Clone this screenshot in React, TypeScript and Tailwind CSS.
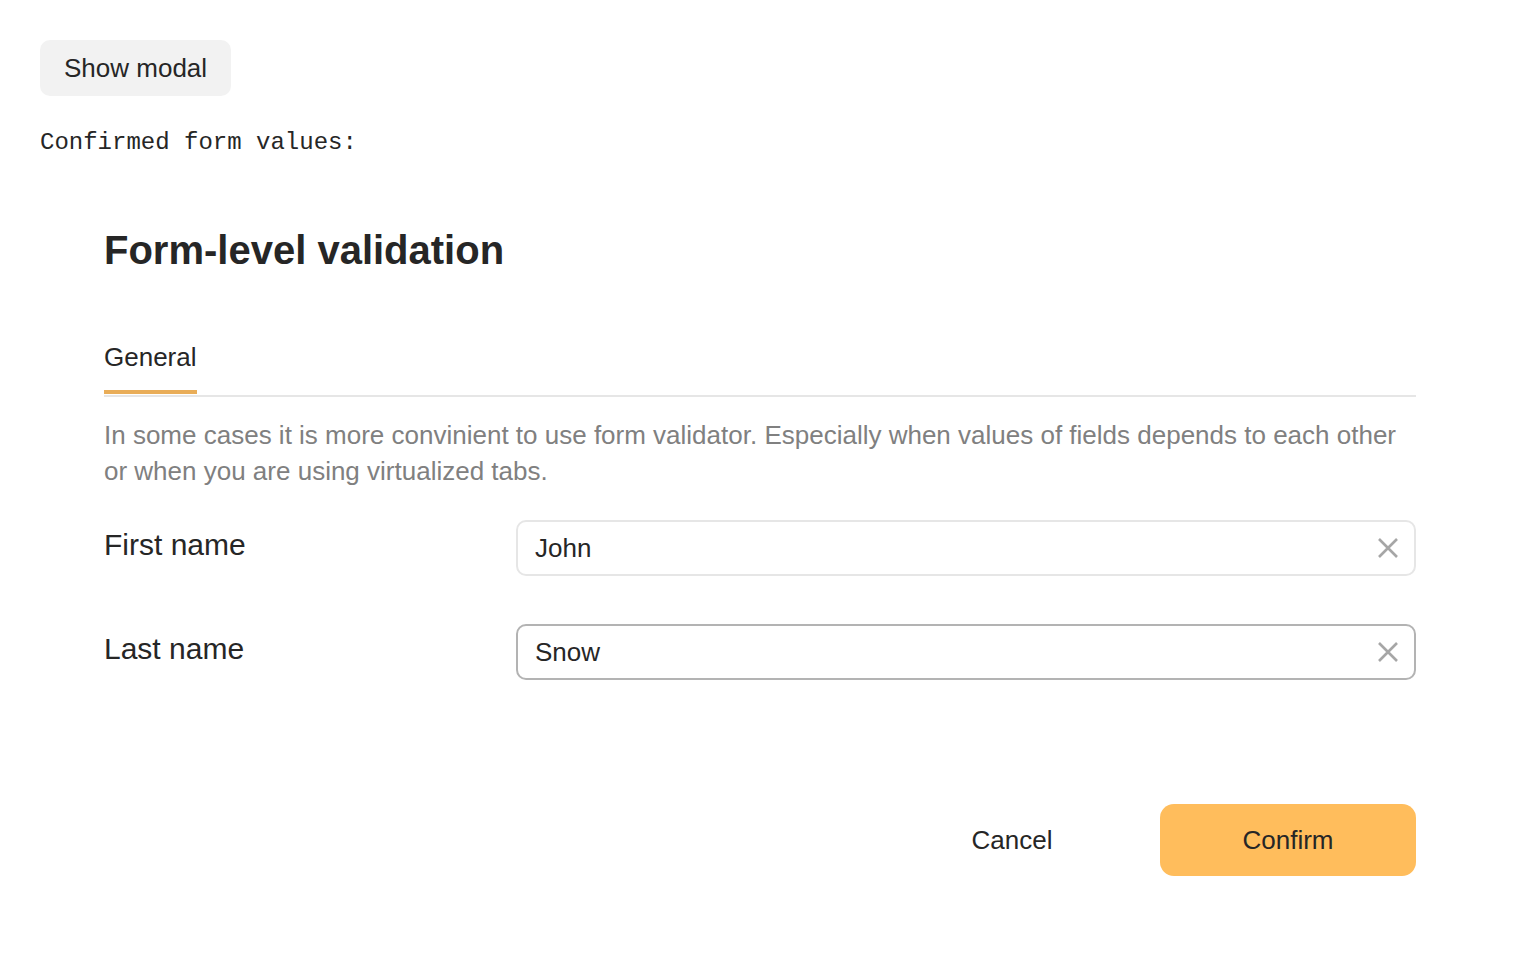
import React, { useState } from 'react'

const sans = "font-['Liberation_Sans',Arial,sans-serif]"

function ClearIcon() {
  return (
    <svg width="22" height="22" viewBox="0 0 22 22" fill="none" stroke="#a6a6a6" strokeWidth="2.6" strokeLinecap="butt">
      <path d="M2 2 L20 20 M20 2 L2 20" />
    </svg>
  )
}

function Field({
  label,
  value,
  onChange,
  active,
}: {
  label: string
  value: string
  onChange: (v: string) => void
  active?: boolean
}) {
  return (
    <div className="flex items-start">
      <label className="w-[412px] shrink-0 pt-[5px] text-[30px] leading-[40px] text-[#262626]">{label}</label>
      <div
        className={
          'flex h-[56px] flex-1 items-center rounded-[10px] border-2 pl-[17px] pr-[15px] ' +
          (active ? 'border-[#b3b3b3]' : 'border-[#e6e6e6]')
        }
      >
        <input
          value={value}
          onChange={(e) => onChange(e.target.value)}
          className="min-w-0 flex-1 bg-transparent text-[26px] text-[#262626] outline-none"
        />
        <button type="button" onClick={() => onChange('')} className="flex items-center justify-center">
          <ClearIcon />
        </button>
      </div>
    </div>
  )
}

export default function App() {
  const [first, setFirst] = useState('John')
  const [last, setLast] = useState('Snow')

  return (
    <div className={`min-h-screen bg-white ${sans} text-[#262626]`}>
      <div className="px-[40px] pt-[40px]">
        <button
          type="button"
          className="h-[56px] rounded-[10px] bg-[#f2f2f2] px-[24px] text-[26px] text-[#262626]"
        >
          Show modal
        </button>
        <pre className="mt-[32px] font-['Liberation_Mono',monospace] text-[24px] leading-[30px] text-[#262626]">
          Confirmed form values:
        </pre>
      </div>

      {/* Modal */}
      <div className="px-[104px] pt-[68px]">
        <h2 className="text-[40px] font-bold leading-[48px] text-[#262626]">Form-level validation</h2>

        {/* Tabs */}
        <div className="mt-[67px] border-b-2 border-[#e6e6e6]">
          <div className="inline-flex flex-col">
            <span className="text-[26px] leading-[32px] text-[#262626]">General</span>
            <span className="mt-[17px] mb-[1px] h-[4px] w-full bg-[#e9ad58]" />
          </div>
        </div>

        <p className="mt-[20px] text-[26px] leading-[36px] text-[#808080]">
          In some cases it is more convinient to use form validator. Especially when values of fields depends to each other
          or when you are using virtualized tabs.
        </p>

        <div className="mt-[31px] flex flex-col gap-[48px]">
          <Field label="First name" value={first} onChange={setFirst} />
          <Field label="Last name" value={last} onChange={setLast} active />
        </div>

        {/* Footer */}
        <div className="mt-[124px] flex justify-end gap-[20px]">
          <button type="button" className="h-[72px] w-[256px] rounded-[14px] text-[26px] text-[#262626]">
            Cancel
          </button>
          <button
            type="button"
            className="h-[72px] w-[256px] rounded-[14px] bg-[#ffbd5c] text-[26px] text-[#262626]"
          >
            Confirm
          </button>
        </div>
      </div>
    </div>
  )
}
